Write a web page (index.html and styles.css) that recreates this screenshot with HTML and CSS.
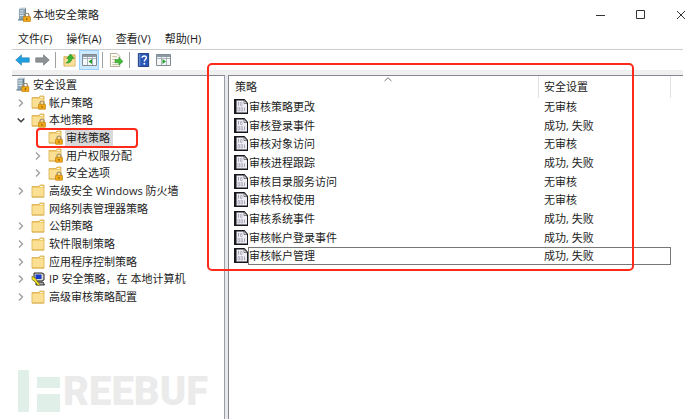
FILE: index.html
```html
<!DOCTYPE html>
<html lang="zh-CN">
<head>
<meta charset="utf-8">
<title>本地安全策略</title>
<link rel="stylesheet" href="styles.css">
</head>
<body>
<svg class="defs" aria-hidden="true">
  <defs>
    <symbol id="lock" viewBox="0 0 8 9">
      <path d="M2 4V2.5a2 2 0 0 1 4 0V4" fill="none" stroke="#9a8a6a" stroke-width="1.2"/>
      <rect x=".5" y="3.8" width="7" height="5" rx=".6" fill="#f0a818" stroke="#b87908" stroke-width=".6"/>
      <path d="M4 5.5v1.7" stroke="#7a5000" stroke-width="1"/>
    </symbol>
    <symbol id="server" viewBox="0 0 14 16">
      <path d="M1 2l2-1.5h5L6.500 2z" fill="#c3d3dc"/>
      <path d="M1 2h6v12H1z" fill="#8ba4b2"/>
      <path d="M7 2l1.500-1.500v12L7 14z" fill="#5d7888"/>
      <path d="M2 4h4M2 6.500h4M2 9h4" stroke="#e4eef3" stroke-width="1"/>
      <path d="M0 13h8v1.500H0z" fill="#6f8795"/>
      <use href="#lock" x="5" y="6" width="9" height="10"/>
    </symbol>
    <symbol id="folder" viewBox="0 0 14 14">
      <path d="M1 2.500h7l1-1.500h4v12H1z" fill="#f1cd70" stroke="#d8ac4a" stroke-width=".8"/>
      <path d="M1.500 4h11v8.500h-11z" fill="#fbdf93"/>
      <path d="M9 2.500h3" stroke="#fff8df" stroke-width="1"/>
      <path d="M1 13h12" stroke="#d6a843" stroke-width=".8"/>
    </symbol>
    <symbol id="folder-lock" viewBox="0 0 16 15">
      <use href="#folder" x="0" y="0" width="14" height="14"/>
      <use href="#lock" x="7" y="5" width="8" height="10"/>
    </symbol>
    <symbol id="ipsec" viewBox="0 0 14 14">
      <path d="M3 1h8l2 1v6l-2 1H3z" fill="#d8d8d2" stroke="#222" stroke-width="1"/>
      <path d="M4.500 2.500h6v4.500h-6z" fill="#173bc4"/>
      <path d="M5 10h7l1.500 3H5z" fill="#aaa" stroke="#222" stroke-width=".9"/>
      <path d="M1 4l4 3 1 2 3 3.500-2 1-3-4-3-2z" fill="#f7e626" stroke="#6b6200" stroke-width=".6"/>
    </symbol>
    <symbol id="binary" viewBox="0 0 14 15">
      <path d="M0 0h14v15H0z" fill="#17171c"/>
      <path d="M2.500 1.500h8l2.500 3V13.500H2.500z" fill="#efedf4"/>
      <path d="M10.500 0H14v4z" fill="#fff"/>
      <path d="M10 1.500v3h3z" fill="#fff" stroke="#33333a" stroke-width=".6"/>
      <path d="M4.500 3v3.500M10.500 8.500V12" stroke="#a5a1b4" stroke-width="1"/>
      <path d="M6.500 3.500h1.500v3H6.500zM4 8.500h1.500V12H4zM7 8.500h1.500V12H7z" fill="none" stroke="#aeaabc" stroke-width=".8"/>
    </symbol>
    <symbol id="right" viewBox="0 0 8 10">
      <path d="M2 1.500L5.500 5 2 8.500" fill="none" stroke="#a0a0a0" stroke-width="1.400"/>
    </symbol>
    <symbol id="down" viewBox="0 0 8 10">
      <path d="M.7 3.500L4 6.800 7.300 3.500" fill="none" stroke="#404040" stroke-width="1.500"/>
    </symbol>
    <symbol id="pane" viewBox="0 0 15 12">
      <path d="M.5.5h14v11H.5z" fill="#f5f7f8" stroke="#808b93"/>
      <path d="M1 1h13v2H1z" fill="#8c9aa6"/>
      <path d="M5.500 3v8M10.500 3v8M1 4.500h13" stroke="#9aa5ad" stroke-width=".8"/>
    </symbol>
  </defs>
</svg>

<div class="window">
  <header class="titlebar">
    <svg class="app-icon"><use href="#server"/></svg>
    <h1 class="title">本地安全策略</h1>
    <div class="controls">
      <button class="control" aria-label="最小化"><svg viewBox="0 0 10 10"><path d="M0 5.500h9" stroke="#333"/></svg></button>
      <button class="control" aria-label="最大化"><svg viewBox="0 0 10 10"><path d="M.5 .5h8v8h-8z" fill="none" stroke="#333"/></svg></button>
      <button class="control" aria-label="关闭"><svg viewBox="0 0 10 10"><path d="M1 1l8 8M9 1L1 9" stroke="#333"/></svg></button>
    </div>
  </header>

  <nav class="menu">
    <button>文件(F)</button>
    <button>操作(A)</button>
    <button>查看(V)</button>
    <button>帮助(H)</button>
  </nav>

  <div class="toolbar">
    <button class="tool" aria-label="后退"><svg viewBox="0 0 15 12"><path d="M.7 6L6.500.8v3h7.800v4.400H6.500v3z" fill="#1ba1e2" stroke="#3b7fa8" stroke-width=".6"/></svg></button>
    <button class="tool" aria-label="前进"><svg viewBox="0 0 15 12"><path d="M14.300 6L8.500.8v3H.7v4.400h7.800v3z" fill="#8e9294" stroke="#6d7275" stroke-width=".6"/></svg></button>
    <span class="separator"></span>
    <button class="tool" aria-label="上一级">
      <svg viewBox="0 0 14 15"><path d="M1 4h5l1.500-2H13v12H1z" fill="#f4cf77" stroke="#cda04a" stroke-width=".8"/><path d="M2 6h10.500v7.500H2z" fill="#fbe09a"/><path d="M3 10.500c2-.5 3-1.500 3.200-4.500H4L8 1l4 5H9.500c-.3 4-3 5.500-6.500 4.500z" fill="#35b632" stroke="#168219" stroke-width=".5"/></svg>
    </button>
    <button class="tool active" aria-label="显示控制台树" aria-pressed="true">
      <svg viewBox="0 0 15 12"><use href="#pane"/><path d="M10 5v5L6.500 7.500z" fill="#21a029"/></svg>
    </button>
    <span class="separator"></span>
    <button class="tool" aria-label="导出列表">
      <svg viewBox="0 0 15 15"><path d="M1 .5h7l3 3v11H1z" fill="#fffef4" stroke="#a79e85" stroke-width=".9"/><path d="M3 4h5M3 7h4M3 10h4M3 12.500h6" stroke="#b8ad91" stroke-width=".9"/><path d="M6 7h4V4.500L14.500 9 10 13v-2.500H6z" fill="#43bb38" stroke="#208324" stroke-width=".5"/></svg>
    </button>
    <span class="separator"></span>
    <button class="tool" aria-label="帮助">
      <svg viewBox="0 0 13 15"><path d="M1 .5h11v14H1z" fill="#2858b8" stroke="#173879"/><path d="M2.500 1v13" stroke="#7898d8"/><path d="M5 5.200C5 2.300 9.700 2.500 9.500 5.200 9.400 6.900 7.400 7 7.400 9" fill="none" stroke="#fff" stroke-width="1.600"/><circle cx="7.400" cy="11.500" r="1" fill="#fff"/></svg>
    </button>
    <button class="tool" aria-label="显示操作窗格">
      <svg viewBox="0 0 15 12"><use href="#pane"/><path d="M6.500 5v5L10 7.500z" fill="#21a029"/></svg>
    </button>
  </div>

  <main class="workspace">
    <section class="tree-pane" aria-label="控制台树">
      <ul class="tree">
        <li class="node root"><svg class="icon"><use href="#server"/></svg><span>安全设置</span></li>
        <li class="node"><svg class="chevron"><use href="#right"/></svg><svg class="icon"><use href="#folder-lock"/></svg><span>帐户策略</span></li>
        <li class="node"><svg class="chevron"><use href="#down"/></svg><svg class="icon"><use href="#folder-lock"/></svg><span>本地策略</span></li>
        <li class="node child selected"><svg class="chevron"></svg><svg class="icon"><use href="#folder-lock"/></svg><span>审核策略</span></li>
        <li class="node child"><svg class="chevron"><use href="#right"/></svg><svg class="icon"><use href="#folder-lock"/></svg><span>用户权限分配</span></li>
        <li class="node child"><svg class="chevron"><use href="#right"/></svg><svg class="icon"><use href="#folder-lock"/></svg><span>安全选项</span></li>
        <li class="node"><svg class="chevron"><use href="#right"/></svg><svg class="icon plain"><use href="#folder"/></svg><span>高级安全 Windows 防火墙</span></li>
        <li class="node"><svg class="chevron"></svg><svg class="icon plain"><use href="#folder"/></svg><span>网络列表管理器策略</span></li>
        <li class="node"><svg class="chevron"><use href="#right"/></svg><svg class="icon plain"><use href="#folder"/></svg><span>公钥策略</span></li>
        <li class="node"><svg class="chevron"><use href="#right"/></svg><svg class="icon plain"><use href="#folder"/></svg><span>软件限制策略</span></li>
        <li class="node"><svg class="chevron"><use href="#right"/></svg><svg class="icon plain"><use href="#folder"/></svg><span>应用程序控制策略</span></li>
        <li class="node"><svg class="chevron"><use href="#right"/></svg><svg class="icon plain"><use href="#ipsec"/></svg><span>IP 安全策略，在 本地计算机</span></li>
        <li class="node"><svg class="chevron"><use href="#right"/></svg><svg class="icon plain"><use href="#folder"/></svg><span>高级审核策略配置</span></li>
      </ul>
      <div class="watermark">
        <svg viewBox="0 0 42 42"><path d="M0 0h11v42H0zM19 7h23v11H19zM19 24h23v18H19z" fill="#e0efe8"/></svg>
        <span>REEBUF</span>
      </div>
    </section>

    <section class="list-pane" aria-label="策略列表">
      <table class="policies">
        <thead>
          <tr><th class="name">策略<svg class="sort" viewBox="0 0 8 5"><path d="M.5 4L4 .8 7.500 4" fill="none" stroke="#777"/></svg></th><th class="setting">安全设置</th></tr>
        </thead>
        <tbody>
          <tr><td><svg><use href="#binary"/></svg><span>审核策略更改</span></td><td>无审核</td></tr>
          <tr><td><svg><use href="#binary"/></svg><span>审核登录事件</span></td><td>成功, 失败</td></tr>
          <tr><td><svg><use href="#binary"/></svg><span>审核对象访问</span></td><td>无审核</td></tr>
          <tr><td><svg><use href="#binary"/></svg><span>审核进程跟踪</span></td><td>成功, 失败</td></tr>
          <tr><td><svg><use href="#binary"/></svg><span>审核目录服务访问</span></td><td>无审核</td></tr>
          <tr><td><svg><use href="#binary"/></svg><span>审核特权使用</span></td><td>无审核</td></tr>
          <tr><td><svg><use href="#binary"/></svg><span>审核系统事件</span></td><td>成功, 失败</td></tr>
          <tr><td><svg><use href="#binary"/></svg><span>审核帐户登录事件</span></td><td>成功, 失败</td></tr>
          <tr class="focused"><td><svg><use href="#binary"/></svg><span>审核帐户管理</span></td><td>成功, 失败</td></tr>
        </tbody>
      </table>
      <div class="callout"></div>
    </section>
  </main>
</div>
</body>
</html>
```
FILE: styles.css
```css
*, *::after { box-sizing: border-box; }

body {
  margin: 0;
  background: #fff;
  color: #1c1c1c;
  font: 11px/16px "Open Sans", "Noto Sans CJK SC", sans-serif;
}

button {
  padding: 0;
  border: 0;
  background: none;
  color: inherit;
  font: inherit;
}

svg { display: block; flex: none; }
.defs { position: absolute; width: 0; height: 0; }

.window {
  display: flex;
  flex-direction: column;
  min-height: 100vh;
  padding: 0 7px 0 12px;
  overflow: hidden;
}

.titlebar {
  display: flex;
  align-items: center;
  height: 29px;
  padding-left: 6px;
}
.app-icon { width: 13px; height: 15px; }
.title { margin: 0 0 0 2px; font-size: 11px; font-weight: 400; }
.controls { display: flex; gap: 30px; margin: 0 -3px 0 auto; }
.control { width: 10px; height: 10px; }
.control svg { width: 10px; height: 10px; }

.menu {
  display: flex;
  gap: 14px;
  height: 21px;
  padding: 2px 6px;
  border-bottom: 1px solid #ccc;
}

.toolbar {
  display: flex;
  align-items: center;
  height: 20px;
}
.tool {
  display: grid;
  place-items: center;
  width: 20px;
  height: 20px;
}
.tool svg { width: 15px; height: 14px; }
.tool.active { border: 1px solid #99d1ff; background: #cce8ff; }
.separator { width: 1px; height: 16px; margin: 0 3px; background: #a0a0a0; }

.workspace {
  display: flex;
  flex: 1;
  border-top: 5px solid #f0f0f0;
}

.tree-pane {
  display: flex;
  flex-direction: column;
  flex: none;
  width: 213px;
  border-top: 1px solid #828790;
  border-right: 1px solid #9a9fa8;
}
.tree {
  display: flex;
  flex-direction: column;
  height: 230px;
  margin: 0;
  padding: 0;
  list-style: none;
}
.node {
  position: relative;
  display: flex;
  flex: 1;
  align-items: center;
  padding-left: 5px;
  white-space: nowrap;
}
.root { padding-left: 3px; }
.child { padding-left: 22px; }
.chevron { width: 8px; height: 10px; margin-right: 6px; }
.icon { width: 16px; height: 15px; margin-right: 2px; }
.icon.plain { width: 14px; height: 14px; margin-right: 4px; }
.selected span {
  height: 16px;
  margin-left: -1px;
  padding: 0 3px 0 1px;
  background: #d9d9d9;
}
.selected::after {
  content: "";
  position: absolute;
  inset: -1px auto -1px 24px;
  width: 102px;
  border: 2px solid #ff2a1a;
  border-radius: 4px;
}

.watermark {
  display: flex;
  align-items: flex-end;
  gap: 3px;
  margin: auto 0 7px 6px;
}
.watermark svg { width: 42px; height: 42px; }
.watermark span {
  color: #ebebeb;
  font: 900 40px/40px Roboto, sans-serif;
}

.list-pane {
  position: relative;
  flex: 1;
  margin-left: 3px;
  border-top: 1px solid #828790;
  border-left: 1px solid #828790;
  box-shadow: -3px 0 #e6e8ec;
}
.policies {
  width: 442px;
  table-layout: fixed;
  border-collapse: separate;
  border-spacing: 0;
}
.policies th {
  height: 22px;
  padding: 0 0 0 5px;
  border-right: 1px solid #e2e2e2;
  font-weight: 400;
  text-align: left;
}
.policies .name { position: relative; width: 310px; padding-left: 6px; }
.sort {
  position: absolute;
  top: 1px;
  left: 50%;
  width: 8px;
  height: 5px;
}
.policies tbody tr { height: 19px; }
.policies tbody tr:nth-child(3n+2) { height: 18px; }
.policies td { padding: 0 0 0 5px; line-height: 18px; vertical-align: top; }
.policies td:first-child { display: flex; }
.policies td svg { width: 14px; height: 15px; margin-top: 1px; }
.policies td span { flex: 1; margin-left: 1px; }
.policies .focused td:last-child {
  border: 1px solid #777;
  border-left: 0;
  line-height: 16px;
}
.focused td span {
  margin-left: 0;
  border: 1px solid #777;
  border-right: 0;
  line-height: 16px;
}
.policies tbody .focused { height: 18px; }

.callout {
  position: absolute;
  top: -13px;
  left: -22px;
  width: 427px;
  height: 208px;
  border: 2px solid #ff2a1a;
  border-radius: 5px;
  pointer-events: none;
}
```
